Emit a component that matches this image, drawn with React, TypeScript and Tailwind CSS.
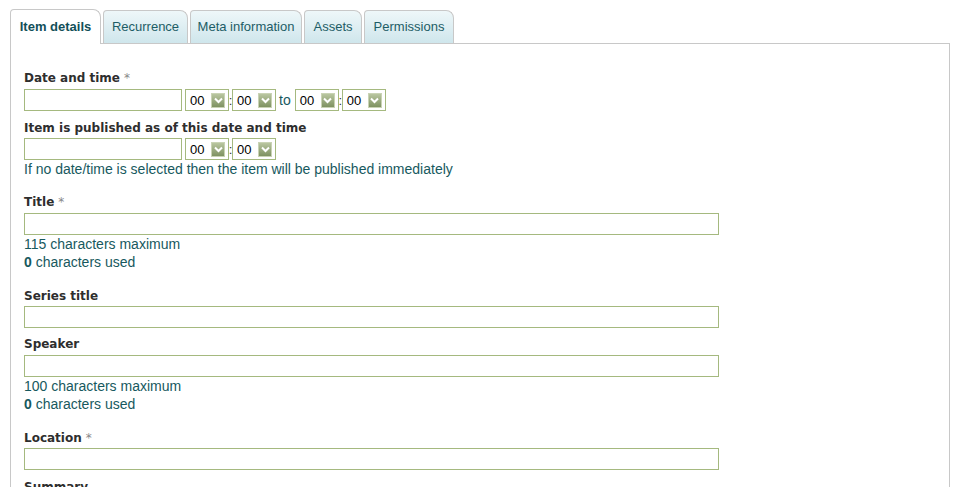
import React from 'react'

const tabs = [
  { label: 'Item details', w: 'w-[91px]', active: true },
  { label: 'Recurrence', w: 'w-[85px]' },
  { label: 'Meta information', w: 'w-[112px]' },
  { label: 'Assets', w: 'w-[58px]' },
  { label: 'Permissions', w: 'w-[90px]' },
]

function Label({ text, req }: { text: string; req?: boolean }) {
  return (
    <div className="h-4 leading-[18px] text-[12px] font-bold text-[#2e2e2e] font-['DejaVu_Sans',sans-serif]">
      {text}
      {req && <span className="font-normal text-[#888] ml-[4px]">*</span>}
    </div>
  )
}

function TextInput({ w }: { w: string }) {
  return <div className={`${w} h-[22px] border border-[#a5b97f] bg-white`} />
}

function TimeSelect() {
  return (
    <div className="w-[44px] h-[22px] border border-[#a5b97f] bg-white flex items-center pl-[4px] pr-[3px] justify-between">
      <span className="text-[13px] text-black leading-none">00</span>
      <span className="w-[14px] h-[15px] border border-[#c9d3b4] bg-gradient-to-b from-[#b9c6a0] to-[#7f9262] flex items-center justify-center">
        <svg width="9" height="7" viewBox="0 0 9 7">
          <path d="M1 1.5 L4.5 5 L8 1.5" fill="none" stroke="#fff" strokeWidth="2" />
        </svg>
      </span>
    </div>
  )
}

function Colon() {
  return <span className="text-[13px] text-[#333] w-[3px] flex justify-center leading-none">:</span>
}

function Help({ children }: { children: React.ReactNode }) {
  return <div className="h-[18px] leading-[19px] text-[14px] text-[#17595e]">{children}</div>
}

export default function App() {
  return (
    <div className="bg-white w-[958px] h-[487px] overflow-hidden pt-[9px] pl-[10px] font-['Liberation_Sans',Arial,sans-serif]">
      {/* tabs */}
      <div className="flex items-end gap-[2px] h-[34px] relative z-10">
        {tabs.map((t) =>
          t.active ? (
            <div
              key={t.label}
              className={`${t.w} h-[35px] -mb-px bg-white border border-b-0 border-[#c8c8c8] rounded-tl-[4px] rounded-tr-[8px] flex items-center justify-center text-[13px] font-bold text-[#124f58]`}
            >
              {t.label}
            </div>
          ) : (
            <div
              key={t.label}
              className={`${t.w} h-[33px] bg-gradient-to-b from-[#eef7f9] to-[#cfe6ec] border border-b-0 border-[#c8c8c8] rounded-tl-[4px] rounded-tr-[8px] flex items-center justify-center text-[13px] text-[#1d5d66]`}
            >
              {t.label}
            </div>
          )
        )}
      </div>

      {/* panel */}
      <div className="w-[940px] h-[500px] border border-b-0 border-[#c8c8c8] pl-[13px] pt-[25px]">
        <Label text="Date and time" req />
        <div className="flex items-center mt-[4px]">
          <TextInput w="w-[158px]" />
          <div className="ml-[3px]" />
          <TimeSelect />
          <Colon />
          <TimeSelect />
          <span className="text-[14px] text-[#17595e] ml-[3px] mr-[4px] leading-none">to</span>
          <TimeSelect />
          <Colon />
          <TimeSelect />
        </div>

        <div className="mt-[8px]">
          <Label text="Item is published as of this date and time" />
        </div>
        <div className="flex items-center mt-[3px]">
          <TextInput w="w-[158px]" />
          <div className="ml-[3px]" />
          <TimeSelect />
          <Colon />
          <TimeSelect />
        </div>
        <Help>If no date/time is selected then the item will be published immediately</Help>

        <div className="mt-[15px]">
          <Label text="Title" req />
        </div>
        <div className="mt-[4px]">
          <TextInput w="w-[695px]" />
        </div>
        <Help>115 characters maximum</Help>
        <Help>
          <b>0</b> characters used
        </Help>

        <div className="mt-[16px]">
          <Label text="Series title" />
        </div>
        <div className="mt-[3px]">
          <TextInput w="w-[695px]" />
        </div>

        <div className="mt-[7px]">
          <Label text="Speaker" />
        </div>
        <div className="mt-[4px]">
          <TextInput w="w-[695px]" />
        </div>
        <Help>100 characters maximum</Help>
        <Help>
          <b>0</b> characters used
        </Help>

        <div className="mt-[16px]">
          <Label text="Location" req />
        </div>
        <div className="mt-[3px]">
          <TextInput w="w-[695px]" />
        </div>

        <div className="mt-[8px]">
          <Label text="Summary" />
        </div>
      </div>
    </div>
  )
}
